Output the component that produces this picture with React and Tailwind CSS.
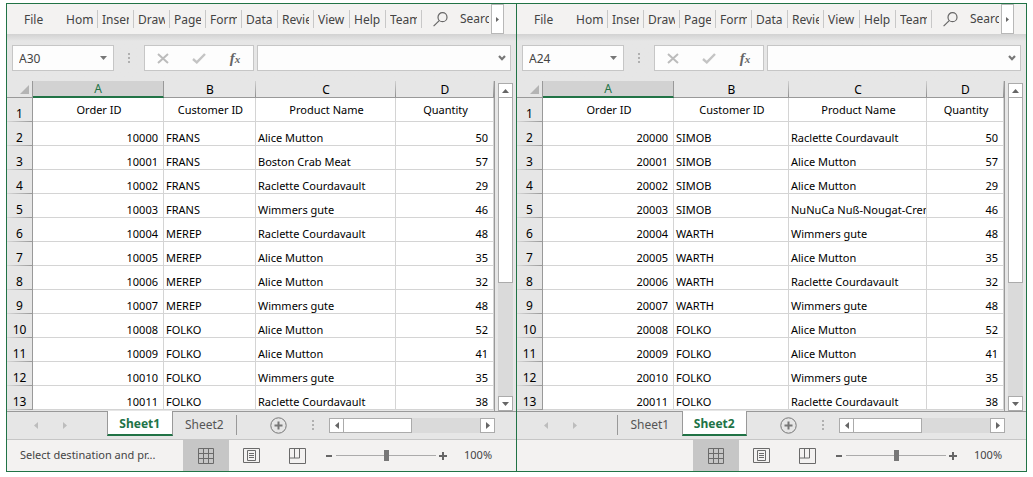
import React from "react";

const TABS = ["Home", "Insert", "Draw", "Page Layout", "Formulas", "Data", "Review", "View", "Help", "Team"];
const HEADINGS = ["Order ID", "Customer ID", "Product Name", "Quantity"];
const R = "Raclette Courdavault";
const M = "Alice Mutton";
const W = "Wimmers gute";

const SHEETS = [
  {
    id: "left",
    cell: "A30",
    active: "Sheet1",
    status: "Select destination and pr...",
    cols: ["w-[131px]", "w-[92px]", "w-[140px]", ""],
    rows: [
      [10000, "FRANS", M, 50],
      [10001, "FRANS", "Boston Crab Meat", 57],
      [10002, "FRANS", R, 29],
      [10003, "FRANS", W, 46],
      [10004, "MEREP", R, 48],
      [10005, "MEREP", M, 35],
      [10006, "MEREP", M, 32],
      [10007, "MEREP", W, 48],
      [10008, "FOLKO", M, 52],
      [10009, "FOLKO", M, 41],
      [10010, "FOLKO", W, 35],
      [10011, "FOLKO", R, 38],
    ],
  },
  {
    id: "right",
    cell: "A24",
    active: "Sheet2",
    status: "",
    cols: ["w-[131px]", "w-[115px]", "w-[138px]", ""],
    rows: [
      [20000, "SIMOB", R, 50],
      [20001, "SIMOB", M, 57],
      [20002, "SIMOB", M, 29],
      [20003, "SIMOB", "NuNuCa Nuß-Nougat-Creme", 46],
      [20004, "WARTH", W, 48],
      [20005, "WARTH", M, 35],
      [20006, "WARTH", R, 32],
      [20007, "WARTH", W, 48],
      [20008, "FOLKO", M, 52],
      [20009, "FOLKO", M, 41],
      [20010, "FOLKO", W, 35],
      [20011, "FOLKO", R, 38],
    ],
  },
];

function Arrow({ dir }) {
  const points = {
    up: "0,4 7,4 3.5,0",
    down: "0,0 7,0 3.5,4",
    left: "4,0 4,7 0,3.5",
    right: "0,0 0,7 4,3.5",
  }[dir];
  const flat = dir === "up" || dir === "down";
  return (
    <svg width={flat ? 7 : 4} height={flat ? 4 : 7} className="fill-current" aria-hidden="true">
      <polygon points={points} />
    </svg>
  );
}

function Dots() {
  return (
    <svg width="2" height="11" className="shrink-0 fill-[#b0b0b0]" aria-hidden="true">
      <rect width="2" height="2" />
      <rect y="4" width="2" height="2" />
      <rect y="8" width="2" height="2" />
    </svg>
  );
}

function Ribbon() {
  return (
    <nav className="flex h-[30px] items-stretch bg-[#f3f2f1] pr-3 text-xs text-[#444]" aria-label="Ribbon">
      <button type="button" className="w-[55px] shrink-0 pt-[2px] pl-[17px] text-left">File</button>
      <div className="flex min-w-0 flex-1 items-center overflow-hidden pr-[2px]">
        {TABS.map((t) => (
          <div key={t} className="flex w-9 shrink-0 items-center border-r border-[#c8c8c8] pl-1">
            <button type="button" className="w-[27px] overflow-hidden pt-[2px] text-left leading-4 whitespace-nowrap">{t}</button>
          </div>
        ))}
        <button type="button" className="flex min-w-0 flex-1 items-center gap-3 overflow-hidden pl-[11px]">
          <svg width="15" height="15" viewBox="0 0 15 15" fill="none" stroke="#666" strokeWidth="1.2" className="shrink-0" aria-hidden="true">
            <circle cx="9.5" cy="5.2" r="4.5" />
            <path d="M6.2 8.6 0.6 14.2" />
          </svg>
          Search
        </button>
      </div>
      <button type="button" aria-label="More tabs" className="flex w-[13px] shrink-0 items-center justify-center border border-[#b8b8b8] bg-white text-[#666]">
        <svg width="3" height="5" className="fill-current" aria-hidden="true"><polygon points="0,0 3,2.5 0,5" /></svg>
      </button>
    </nav>
  );
}

function FormulaBar({ id, cell }) {
  return (
    <div className="flex items-center bg-linear-to-b from-[#d2d2d2] via-[#e6e6e6] via-15% to-[#e6e6e6] px-[5px] pt-[11px] pb-[10px]">
      <div className="flex h-[26px] w-[102px] items-center border border-[#c6c6c6] bg-[#fdfdfd] px-[6px]">
        <input
          id={`${id}-name`}
          aria-label="Name box"
          defaultValue={cell}
          className="min-w-0 flex-1 bg-transparent pt-[2px] text-xs text-[#444] outline-none"
        />
        <span className="text-[#777]"><Arrow dir="down" /></span>
      </div>
      <div className="flex w-[30px] justify-center"><Dots /></div>
      <div className="flex h-[26px] w-[110px] items-center justify-around border border-[#c6c6c6] bg-[#fdfdfd]">
        <button type="button" aria-label="Cancel">
          <svg width="12" height="11" stroke="#bcbcbc" strokeWidth="2" aria-hidden="true"><path d="M1 1 11 10M11 1 1 10" /></svg>
        </button>
        <button type="button" aria-label="Enter">
          <svg width="14" height="11" fill="none" stroke="#c4c4c4" strokeWidth="2.4" aria-hidden="true"><path d="M1 6 4.8 9.4 13 1" /></svg>
        </button>
        <button type="button" aria-label="Insert function" className="pr-px font-['Liberation_Serif',serif] text-[15px] leading-4 font-bold text-[#666] italic">
          f<span className="text-[11px]">x</span>
        </button>
      </div>
      <div className="ml-[3px] flex h-[26px] min-w-0 flex-1 items-center border border-[#c6c6c6] bg-[#fdfdfd] pr-1">
        <input id={`${id}-formula`} aria-label="Formula" className="min-w-0 flex-1 bg-transparent px-1 text-xs outline-none" />
        <svg width="8" height="6" fill="none" stroke="#777" strokeWidth="2.2" aria-hidden="true"><path d="M1 1 4 4.2 7 1" /></svg>
      </div>
    </div>
  );
}

const CORNER = "border-r border-b border-[#999] p-0";
const COLHEAD =
  "border-b border-[#999] p-0 pt-px text-xs leading-[15px] font-normal bg-[linear-gradient(#d0d0d0,#909090)] bg-[length:1px_100%] bg-right bg-no-repeat";
const ROWHEAD =
  "border-r border-[#999] p-0 align-bottom text-xs leading-4 font-normal bg-[linear-gradient(to_right,#d8d8d8,#999)] bg-[length:100%_1px] bg-bottom bg-no-repeat";
const CELL = "overflow-hidden border-r border-b border-[#d4d4d4] bg-white py-0 whitespace-nowrap";

function Grid({ cols, rows }) {
  return (
    <div className="min-w-0 flex-1 border-r border-[#999] pb-px">
      <table className="w-full table-fixed border-separate border-spacing-0 text-[11px] leading-[14px] text-black">
        <colgroup>
          <col className="w-[26px]" />
          {cols.map((c, i) => <col key={i} className={c} />)}
        </colgroup>
        <thead>
          <tr className="h-[17px]">
            <td className={CORNER}>
              <svg width="9" height="9" className="mr-[3px] ml-auto block fill-[#b4b4b4]" aria-hidden="true"><polygon points="9,0 9,9 0,9" /></svg>
            </td>
            <th scope="col" className="border-r border-b-2 border-r-[#999] border-b-[#217346] bg-[#d2d2d2] p-0 pt-px text-xs leading-[14px] font-normal text-[#217346]">A</th>
            <th scope="col" className={COLHEAD}>B</th>
            <th scope="col" className={COLHEAD}>C</th>
            <th scope="col" className={COLHEAD}>D</th>
          </tr>
        </thead>
        <tbody>
          <tr className="h-6">
            <th scope="row" className={ROWHEAD}>1</th>
            {HEADINGS.map((h) => <td key={h} className={`${CELL} pt-px pl-[2px] text-center align-middle`}>{h}</td>)}
          </tr>
          {rows.map((r, i) => (
            <tr key={i} className="h-6">
              <th scope="row" className={ROWHEAD}>{i + 2}</th>
              <td className={`${CELL} pr-[5px] pl-[2px] text-right align-bottom`}>{r[0]}</td>
              <td className={`${CELL} pl-[2px] align-bottom`}>{r[1]}</td>
              <td className={`${CELL} pl-[2px] align-bottom`}>{r[2]}</td>
              <td className={`${CELL} pr-[5px] pl-[2px] text-right align-bottom`}>{r[3]}</td>
            </tr>
          ))}
        </tbody>
      </table>
    </div>
  );
}

const SCROLLBTN = "flex size-[15px] shrink-0 items-center justify-center border border-[#ababab] bg-white text-[#666]";

function SheetTab({ name, active }) {
  if (active) {
    return (
      <button type="button" role="tab" aria-selected="true" className="z-10 -mt-px h-[25px] w-[66px] border-x border-b-2 border-x-[#999] border-b-[#217346] bg-white pt-[3px] text-xs font-bold text-[#217346]">
        {name}
      </button>
    );
  }
  return (
    <button type="button" role="tab" aria-selected="false" className="mt-[3px] h-5 w-16 text-xs text-[#555]">{name}</button>
  );
}

function SheetBar({ active }) {
  const first = active === "Sheet1";
  return (
    <div className="flex h-[29px] items-start border-t border-b border-t-[#999] border-b-[#c6c6c6] bg-[#e6e6e6]">
      <div className="flex h-[27px] w-[100px] shrink-0 items-center gap-[25px] pl-[27px] text-[#bdbdbd]">
        <button type="button" aria-label="Previous sheet"><Arrow dir="left" /></button>
        <button type="button" aria-label="Next sheet"><Arrow dir="right" /></button>
      </div>
      <div role="tablist" className="flex w-[130px] shrink-0 items-start">
        {!first && <span className="mt-[3px] h-5 w-px bg-[#999]" />}
        <SheetTab name="Sheet1" active={first} />
        <SheetTab name="Sheet2" active={!first} />
        {first && <span className="mt-[3px] h-5 w-px bg-[#999]" />}
      </div>
      <div className="flex h-[27px] min-w-0 flex-1 items-center pr-[21px] pl-[33px]">
        <button type="button" aria-label="New sheet" className="shrink-0">
          <svg width="17" height="17" fill="none" stroke="#777" aria-hidden="true">
            <circle cx="8.5" cy="8.5" r="7.7" />
            <path d="M8.5 4.5v8M4.5 8.5h8" strokeWidth="2" />
          </svg>
        </button>
        <div className="flex w-[42px] shrink-0 justify-center pl-[9px]"><Dots /></div>
        <div className="flex h-[15px] min-w-0 flex-1 bg-[#dadada]">
          <button type="button" aria-label="Scroll left" className={SCROLLBTN}><Arrow dir="left" /></button>
          <div className="w-[68px] border border-l-0 border-[#ababab] bg-white" />
          <div className="flex-1" />
          <button type="button" aria-label="Scroll right" className={SCROLLBTN}><Arrow dir="right" /></button>
        </div>
      </div>
    </div>
  );
}

const VIEWBTN = "flex h-full w-[46px] shrink-0 items-center";

function StatusBar({ id, status }) {
  return (
    <div className="flex h-[31px] items-center bg-[#f3f2f1] text-[11px] text-[#444]">
      <span className="w-[176px] shrink-0 truncate pl-[13px]">{status}</span>
      <button type="button" aria-label="Normal view" className={`${VIEWBTN} justify-center bg-[#c6c6c6]`}>
        <svg width="16" height="16" fill="none" stroke="#6a6a6a" aria-hidden="true">
          <path d="M.5.5h15v15H.5zM5.5.5v15M10.5.5v15M.5 5.5h15M.5 10.5h15" />
        </svg>
      </button>
      <button type="button" aria-label="Page layout view" className={`${VIEWBTN} pl-[14px]`}>
        <svg width="17" height="15" fill="none" stroke="#6a6a6a" aria-hidden="true">
          <path d="M.5.5h16v14H.5zM4.5 2.5h8v10h-8zM6 5.5h5M6 7.5h5M6 9.5h5" />
        </svg>
      </button>
      <button type="button" aria-label="Page break view" className={`${VIEWBTN} pl-[14px]`}>
        <svg width="17" height="16" fill="none" stroke="#6a6a6a" aria-hidden="true">
          <path d="M.5.5h16v15H.5zM5.5.5v9.5M10.5.5v9.5M.5 10h10" />
        </svg>
      </button>
      <button type="button" aria-label="Zoom out" className="ml-[5px] shrink-0">
        <svg width="6" height="2" className="fill-[#666]" aria-hidden="true"><rect width="6" height="2" /></svg>
      </button>
      <input
        id={`${id}-zoom`}
        type="range"
        aria-label="Zoom"
        defaultValue="50"
        className="mr-[3px] ml-1 h-3 w-[100px] shrink-0 appearance-none bg-[linear-gradient(#ababab,#ababab)] bg-[length:100%_1px] bg-center bg-no-repeat [&::-webkit-slider-thumb]:h-[11px] [&::-webkit-slider-thumb]:w-[5px] [&::-webkit-slider-thumb]:appearance-none [&::-webkit-slider-thumb]:bg-[#777]"
      />
      <button type="button" aria-label="Zoom in" className="shrink-0">
        <svg width="8" height="8" stroke="#666" strokeWidth="2" aria-hidden="true"><path d="M4 0v8M0 4h8" /></svg>
      </button>
      <span className="pl-[17px]">100%</span>
    </div>
  );
}

function Workbook({ sheet }) {
  return (
    <section className="min-w-0 bg-[#e6e6e6]">
      <Ribbon />
      <FormulaBar id={sheet.id} cell={sheet.cell} />
      <div className="flex gap-[3px] pr-[3px]">
        <Grid cols={sheet.cols} rows={sheet.rows} />
        <div className="mt-[2px] flex w-[15px] flex-col bg-[#dadada]">
          <button type="button" aria-label="Scroll up" className={SCROLLBTN}><Arrow dir="up" /></button>
          <div className="h-[185px] border border-t-0 border-[#ababab] bg-white" />
          <div className="flex-1" />
          <button type="button" aria-label="Scroll down" className={SCROLLBTN}><Arrow dir="down" /></button>
        </div>
      </div>
      <SheetBar active={sheet.active} />
      <StatusBar id={sheet.id} status={sheet.status} />
    </section>
  );
}

export default function App() {
  return (
    <main className="bg-white px-[6px] pt-[3px] pb-[5px] font-['Noto_Sans','Open_Sans',sans-serif]">
      <div className="grid grid-cols-[1fr_1px_1fr] border border-[#217346]">
        <Workbook sheet={SHEETS[0]} />
        <div className="bg-[#217346]" />
        <Workbook sheet={SHEETS[1]} />
      </div>
    </main>
  );
}
